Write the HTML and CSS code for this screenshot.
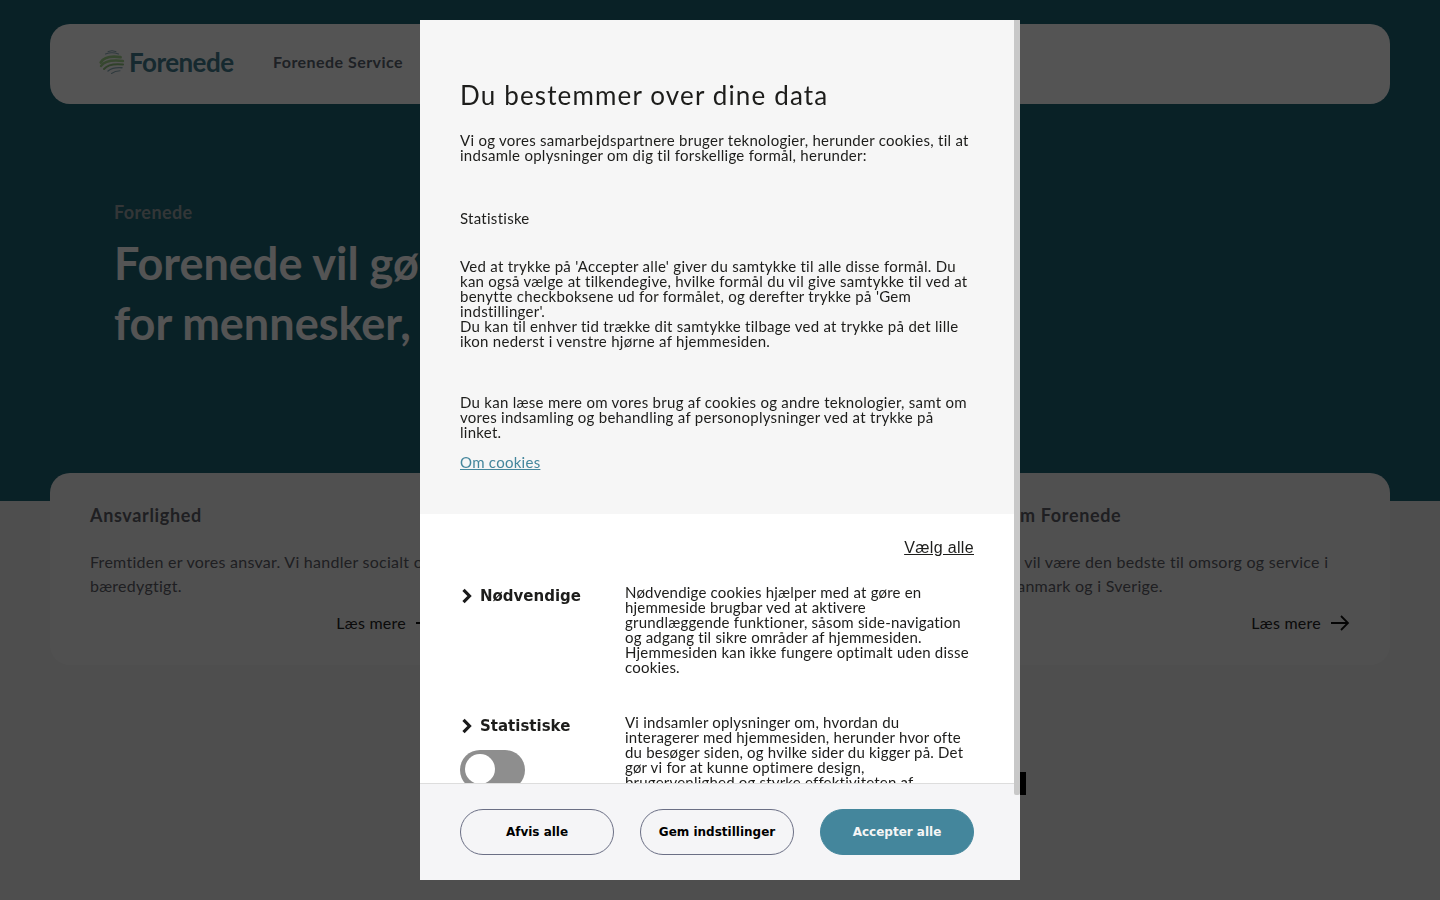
FILE: index.html
```html
<!DOCTYPE html>
<html lang="da">
<head>
    <meta charset="UTF-8">
    <meta name="viewport" content="width=device-width, initial-scale=1.0">
    <title>Forenede</title>
    <link rel="stylesheet" href="styles.css">
</head>
<body>
    <div class="page">
        <section class="hero">
            <header class="site-header">
                <a class="logo" href="#">
                    <svg class="logo-mark" width="26" height="26" viewBox="0 0 26 26" fill="none" stroke-linecap="round">
                        <path d="M9 2.500Q13 .800 17 2.500" stroke="#8fb0bb" stroke-width="1"/>
                        <path d="M6.500 5Q13 2.500 19.500 5" stroke="#8fb0bb" stroke-width="1.200"/>
                        <path d="M1.800 13.500Q6 6 21.500 8.200" stroke="#a5d68e" stroke-width="2.800"/>
                        <path d="M2 17Q7 10 24 12" stroke="#a5d68e" stroke-width="2.400"/>
                        <path d="M5 20Q10 14 24 15.500" stroke="#93c481" stroke-width="2"/>
                        <path d="M9 22Q14 18 23 18.800" stroke="#8fb0bb" stroke-width="1.400"/>
                        <path d="M12.500 24.500Q16 22 21 21.800" stroke="#8fb0bb" stroke-width="1.100"/>
                    </svg>
                    <span class="logo-text">Forenede</span>
                </a>
                <nav class="main-nav">
                    <a href="#">Forenede Service</a>
                </nav>
            </header>
            <div class="hero-text">
                <p class="eyebrow">Forenede</p>
                <h1>Forenede vil gøre en forskel<br>for mennesker, hver dag</h1>
            </div>
        </section>

        <section class="values">
            <article class="value">
                <h3>Ansvarlighed</h3>
                <p>Fremtiden er vores ansvar. Vi handler socialt og<br>bæredygtigt.</p>
                <a class="more" href="#">Læs mere
                    <svg width="20" height="16" viewBox="0 0 20 16" fill="none" stroke="#111" stroke-width="1.800"><path d="M1 8h17M11 1l7 7-7 7"/></svg>
                </a>
            </article>
            <article class="value">
                <h3>Omsorg</h3>
                <p>Vi sætter mennesket først i alt det, vi gør.</p>
                <a class="more" href="#">Læs mere
                    <svg width="20" height="16" viewBox="0 0 20 16" fill="none" stroke="#111" stroke-width="1.800"><path d="M1 8h17M11 1l7 7-7 7"/></svg>
                </a>
            </article>
            <article class="value">
                <h3>Om Forenede</h3>
                <p>Vi vil være den bedste til omsorg og service i<br>Danmark og i Sverige.</p>
                <a class="more" href="#">Læs mere
                    <svg width="20" height="16" viewBox="0 0 20 16" fill="none" stroke="#111" stroke-width="1.800"><path d="M1 8h17M11 1l7 7-7 7"/></svg>
                </a>
            </article>
        </section>

        <div class="promo"></div>
    </div>

    <div class="overlay"></div>

    <div class="cookie-modal">
        <div class="cookie-scroll">
            <div class="cookie-intro">
                <h2>Du bestemmer over dine data</h2>
                <p>Vi og vores samarbejdspartnere bruger teknologier, herunder cookies, til at<br>indsamle oplysninger om dig til forskellige formål, herunder:</p>
                <p class="purpose">Statistiske</p>
                <p class="consent">Ved at trykke på 'Accepter alle' giver du samtykke til alle disse formål. Du<br>kan også vælge at tilkendegive, hvilke formål du vil give samtykke til ved at<br>benytte checkboksene ud for formålet, og derefter trykke på 'Gem<br>indstillinger'.<br>Du kan til enhver tid trække dit samtykke tilbage ved at trykke på det lille<br>ikon nederst i venstre hjørne af hjemmesiden.</p>
                <p class="read-more">Du kan læse mere om vores brug af cookies og andre teknologier, samt om<br>vores indsamling og behandling af personoplysninger ved at trykke på<br>linket.</p>
                <a class="cookie-link" href="#">Om cookies</a>
            </div>
            <div class="cookie-options">
                <div class="select-all"><a href="#">Vælg alle</a></div>
                <div class="option">
                    <div class="option-head">
                        <div class="option-title">
                            <svg width="12" height="16" viewBox="0 0 12 16" fill="none" stroke="#1a1a1a" stroke-width="3.200"><path d="M3.500 1.800l6 6.200-6 6.200"/></svg>
                            <span>Nødvendige</span>
                        </div>
                    </div>
                    <p>Nødvendige cookies hjælper med at gøre en<br>hjemmeside brugbar ved at aktivere<br>grundlæggende funktioner, såsom side-navigation<br>og adgang til sikre områder af hjemmesiden.<br>Hjemmesiden kan ikke fungere optimalt uden disse<br>cookies.</p>
                </div>
                <div class="option option-stat">
                    <div class="option-head">
                        <div class="option-title">
                            <svg width="12" height="16" viewBox="0 0 12 16" fill="none" stroke="#1a1a1a" stroke-width="3.200"><path d="M3.500 1.800l6 6.200-6 6.200"/></svg>
                            <span>Statistiske</span>
                        </div>
                        <div class="toggle"><span class="knob"></span></div>
                    </div>
                    <p>Vi indsamler oplysninger om, hvordan du<br>interagerer med hjemmesiden, herunder hvor ofte<br>du besøger siden, og hvilke sider du kigger på. Det<br>gør vi for at kunne optimere design,<br>brugervenlighed og styrke effektiviteten af<br>hjemmesiden.</p>
                </div>
            </div>
        </div>
        <div class="cookie-actions">
            <button class="btn">Afvis alle</button>
            <button class="btn">Gem indstillinger</button>
            <button class="btn btn-primary">Accepter alle</button>
        </div>
        <div class="scroll-thumb"></div>
    </div>
</body>
</html>
```

FILE: styles.css
```css
* {
    box-sizing: border-box;
}
html, body {
    height: 100%;
}
body {
    margin: 0;
    overflow: hidden;
    background-color: #ebebeb;
    font-family: "Lato", "Open Sans", sans-serif;
}
a {
    color: inherit;
    text-decoration: none;
}

/* page behind the dialog */
.hero {
    height: 501px;
    padding: 24px 50px 0;
    background-color: #1e6474;
}
.site-header {
    display: flex;
    align-items: center;
    height: 80px;
    padding: 0 0 4px 49px;
    background: white;
    border-radius: 20px;
}
.logo {
    display: flex;
    align-items: center;
    gap: 4px;
    width: 174px;
}
.logo-text {
    font-size: 26px;
    font-weight: 700;
    letter-spacing: -0.55px;
    color: #447e90;
}
.main-nav {
    margin-bottom: 2px;
    font-size: 16px;
    font-weight: 700;
    letter-spacing: 0.45px;
    color: #5c6672;
}
.hero-text {
    padding: 97px 0 0 64px;
}
.eyebrow {
    margin: 0 0 10px;
    font-size: 18px;
    font-weight: 700;
    letter-spacing: 0.4px;
    color: #9aa4a8;
}
h1 {
    margin: 0;
    font-size: 45px;
    line-height: 60px;
    font-weight: 700;
    color: white;
}
.values {
    display: grid;
    grid-template-columns: 345px 345px 345px;
    justify-content: space-between;
    height: 192px;
    margin: -28px 50px 0;
    padding: 32px 40px 0;
    background: #f3f3f3;
    border-radius: 20px;
    position: relative;
}
.value h3 {
    margin: 0 0 25px;
    font-size: 18px;
    line-height: 20px;
    font-weight: 700;
    letter-spacing: 0.65px;
    color: #5e6068;
}
.value p {
    margin: 0;
    font-size: 16px;
    line-height: 24px;
    letter-spacing: 0.26px;
    color: #5e6068;
}
.more {
    display: flex;
    justify-content: flex-end;
    align-items: center;
    gap: 9px;
    margin-top: 15px;
    font-size: 16px;
    letter-spacing: 0.25px;
    color: #222;
}
.promo {
    width: 200px;
    height: 23px;
    margin: 107px 0 0 826px;
    background: black;
}
.overlay {
    position: fixed;
    top: 0;
    left: 0;
    width: 100%;
    height: 100%;
    background: rgba(0,0,0,0.67);
}

/* cookie dialog */
.cookie-modal {
    position: fixed;
    top: 20px;
    left: 420px;
    display: flex;
    flex-direction: column;
    width: 600px;
    height: 860px;
    background: white;
    border-radius: 3px;
    color: #1d1d1b;
}
.cookie-scroll {
    flex: 1;
    min-height: 0;
    overflow: hidden;
}
.cookie-intro {
    height: 494px;
    padding: 59px 40px 0;
    background: #f6f6f6;
}
.cookie-intro h2 {
    margin: 0 0 22px;
    font-size: 26px;
    line-height: 32px;
    font-weight: 400;
    letter-spacing: 1.15px;
}
.cookie-intro p, .option p {
    margin: 0;
    font-size: 15px;
    line-height: 15px;
    letter-spacing: 0.27px;
}
.option p {
    letter-spacing: 0.2px;
}
.cookie-intro .purpose {
    margin-top: 48px;
}
.cookie-intro .consent {
    margin-top: 33px;
}
.cookie-intro .read-more {
    margin-top: 46px;
}
.cookie-link {
    display: inline-block;
    margin-top: 15px;
    font-size: 15px;
    line-height: 15px;
    letter-spacing: 0.27px;
    color: #44869c;
    text-decoration: underline;
}
.cookie-options {
    padding: 25px 46px 0 40px;
}
.select-all {
    text-align: right;
    font-family: "Liberation Sans", Arial, sans-serif;
    font-size: 16px;
    line-height: 18px;
    letter-spacing: 0.35px;
}
.select-all a {
    text-decoration: underline;
}
.option {
    display: flex;
    margin-top: 28px;
}
.option-stat {
    margin-top: 40px;
}
.option-head {
    flex: none;
    width: 165px;
}
.option-title {
    display: flex;
    align-items: center;
    gap: 8px;
    padding-top: 1px;
    font-family: "DejaVu Sans", sans-serif;
    font-size: 15px;
    font-weight: 700;
    line-height: 20px;
}
.toggle {
    width: 65px;
    height: 40px;
    margin-top: 14px;
    padding: 4px 5px;
    background: #8e8e8e;
    border-radius: 20px;
}
.knob {
    display: block;
    width: 30px;
    height: 30px;
    background: white;
    border-radius: 50%;
}
.cookie-actions {
    flex: none;
    display: flex;
    justify-content: space-between;
    align-items: center;
    height: 97px;
    padding: 0 46px 0 40px;
    background: #f5f5f7;
    border-top: 1px solid #dddddd;
}
.btn {
    width: 154px;
    height: 46px;
    padding-bottom: 2px;
    background: transparent;
    border: 1px solid #6b6f85;
    border-radius: 23px;
    font-family: "DejaVu Sans", sans-serif;
    font-size: 12px;
    font-weight: 700;
    color: black;
}
.btn-primary {
    background: #44869c;
    border-color: #44869c;
    color: #f5f5f5;
}
.scroll-thumb {
    position: absolute;
    top: 0;
    right: 0;
    width: 6px;
    height: 775px;
    background: #c8c8c8;
    border-radius: 0 0 2px 2px;
}
```
